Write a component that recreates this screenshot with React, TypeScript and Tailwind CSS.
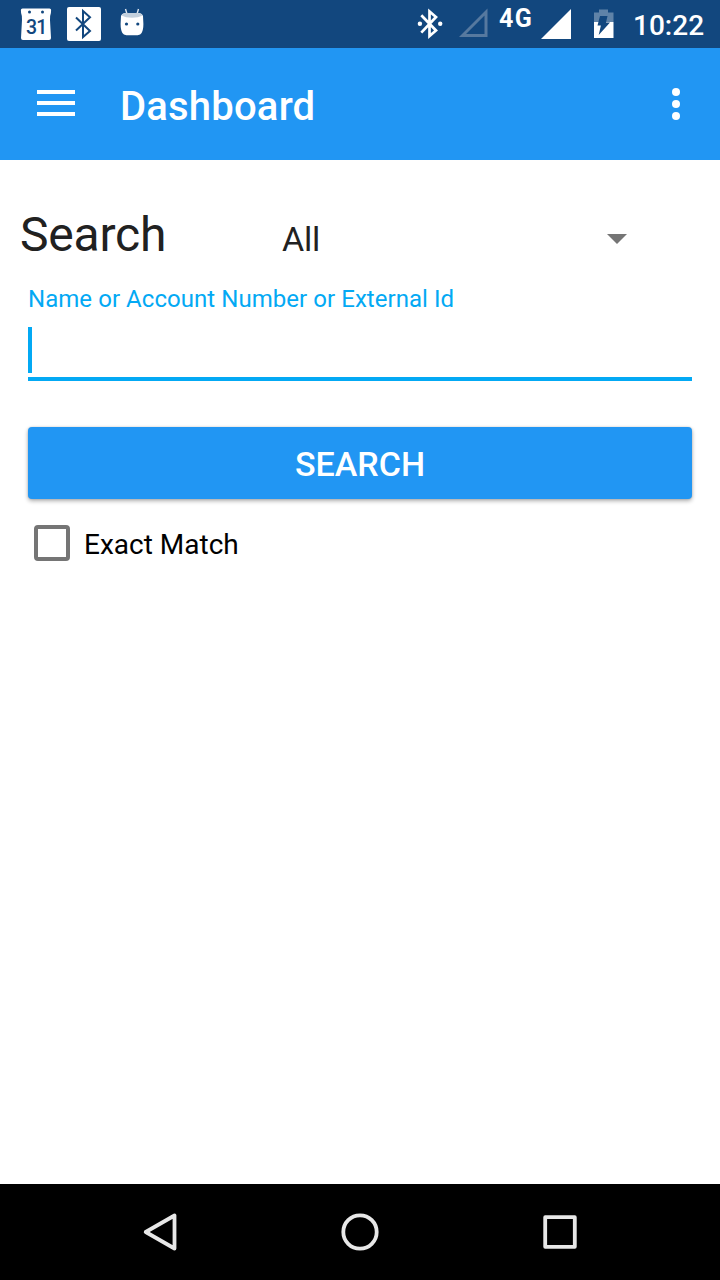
import React from "react";

function CalendarIcon() {
  return (
    <svg width="32" height="34" viewBox="20 7 32 34" className="block shrink-0">
      <path
        d="M22.500 8.500h27q1.700 0 1.600 1.500l-.2 3q-1.200 3-.9 7l1 18q0 2-2 2H23q-2 0-2-2l1-18q.3-4-.9-7l-.2-3q0-1.500 1.600-1.500z"
        fill="#fff"
      />
      <circle cx="29.500" cy="12" r="1.500" fill="#12477e" />
      <circle cx="42.500" cy="12" r="1.500" fill="#12477e" />
      <text x="26" y="33.500" fontFamily="Roboto, sans-serif" fontSize="19.500" fontWeight="500" letterSpacing="-0.900" fill="#12477e">
        31
      </text>
    </svg>
  );
}

function BluetoothBadge() {
  return (
    <svg width="34" height="34" viewBox="67 7 34 34" className="block shrink-0">
      <rect x="67" y="7" width="34" height="34" rx="2" fill="#fff" />
      <path d="M76 17.500L90 31l-7 6V11l7 6.200L76 30.500" fill="none" stroke="#12477e" strokeWidth="2" />
    </svg>
  );
}

function AndroidIcon() {
  return (
    <svg width="26" height="28" viewBox="119 8 26 28" className="block shrink-0">
      <path d="M125.500 9l1.500 5M138.500 9l-1.500 5" stroke="#dfe7ef" strokeWidth="1.400" />
      <path d="M121 16q1-3 5-3h12q4 0 5 3l.4 8q0 6-1.800 9-1 2-4 2.200h-11.200q-3-.2-4-2.200-1.800-3-1.800-9z" fill="#fff" />
      <path d="M121.500 15.500q1-2.500 4.500-2.500h12q3.500 0 4.500 2.500-4 2.200-10.500 2.200t-10.500-2.200z" fill="#c3d0dd" />
      <circle cx="126.500" cy="24" r="1.600" fill="#12477e" />
      <circle cx="137.800" cy="24" r="1.600" fill="#12477e" />
    </svg>
  );
}

function BluetoothConnected() {
  return (
    <svg width="28" height="32" viewBox="416 8 28 32" className="block shrink-0">
      <path d="M421.300 15.300L436 30.500l-6.500 5.500V11.500l6.500 5.500-14.700 15.700" fill="none" stroke="#fff" strokeWidth="2.700" />
      <circle cx="419.900" cy="23.800" r="2.200" fill="#fff" />
      <circle cx="440.200" cy="23.800" r="2.200" fill="#fff" />
    </svg>
  );
}

function BatteryCharging() {
  return (
    <svg width="20" height="30" viewBox="594 9 20 30" className="block shrink-0">
      <path d="M594 22V12.500h5V9.500h9v3h5.500V22z" fill="#5f83a8" />
      <path d="M594 22h19.500v16H594z" fill="#fff" />
      <path d="M600 16h7.500l-1.500 6.500h4L598.700 35l2.200-9.500h-3.400z" fill="#12477e" />
    </svg>
  );
}

function StatusBar() {
  return (
    <header className="flex h-12 items-start bg-[#12477e] pl-5 text-white">
      <div className="flex pt-[7px]">
        <CalendarIcon />
        <div className="ml-[15px]">
          <BluetoothBadge />
        </div>
        <div className="ml-[18px] pt-px">
          <AndroidIcon />
        </div>
      </div>
      <div className="ml-auto flex pr-4">
        <div className="pt-2">
          <BluetoothConnected />
        </div>
        <svg width="30" height="30" viewBox="459 8 30 30" className="mt-2 ml-[15px] block">
          <path d="M462.500 35.500h23.500V12z" fill="none" stroke="#56799f" strokeWidth="3" />
        </svg>
        <span className="mt-[4px] ml-[10px] w-[35px] text-[25px] leading-[30px] font-bold tracking-[1.5px] whitespace-nowrap">4G</span>
        <svg width="30" height="30" viewBox="541 9 30 30" className="mt-[9px] ml-[7px] block">
          <path d="M541 39h30V9z" fill="#fff" />
        </svg>
        <div className="mt-[9px] ml-[23px]">
          <BatteryCharging />
        </div>
        <span className="ml-[19px] w-[71px] text-[28px] leading-[51px] font-medium whitespace-nowrap">10:22</span>
      </div>
    </header>
  );
}

function AppBar() {
  return (
    <div className="flex h-28 items-center bg-[#2196f3] text-white">
      <button className="mb-0.5 ml-[37px] flex h-[26px] w-[38px] flex-col justify-between" aria-label="Menu">
        <span className="h-1 w-full bg-white" />
        <span className="h-1 w-full bg-white" />
        <span className="h-1 w-full bg-white" />
      </button>
      <h1 className="ml-[45px] pt-[5px] text-[40px] leading-[49px] font-medium tracking-[0.2px]">Dashboard</h1>
      <button className="mr-10 ml-auto flex flex-col gap-1" aria-label="More">
        <span className="size-2 rounded-full bg-white" />
        <span className="size-2 rounded-full bg-white" />
        <span className="size-2 rounded-full bg-white" />
      </button>
    </div>
  );
}

function NavigationBar() {
  return (
    <nav className="flex h-24 items-center justify-center bg-black">
      <svg width="200" height="96" viewBox="60 1184 200 96" className="block">
        <path d="M174.500 1215.500v33L145.700 1232z" fill="none" stroke="#e8e8e8" strokeWidth="3.800" strokeLinejoin="round" />
      </svg>
      <svg width="200" height="96" viewBox="260 1184 200 96" className="block">
        <circle cx="360" cy="1232" r="16.700" fill="none" stroke="#e8e8e8" strokeWidth="3.800" />
      </svg>
      <svg width="200" height="96" viewBox="460 1184 200 96" className="block">
        <rect x="545.200" y="1217.200" width="29.600" height="29.600" fill="none" stroke="#e8e8e8" strokeWidth="3.800" strokeLinejoin="round" />
      </svg>
    </nav>
  );
}

export default function App() {
  return (
    <div className="flex h-[1280px] w-[720px] flex-col overflow-hidden bg-white font-['Roboto',sans-serif]">
      <StatusBar />
      <AppBar />
      <main className="flex-1">
        <div className="flex h-[120px] items-start text-[#212121]">
          <h2 className="w-[282px] pt-[46px] pl-5 text-[48px] leading-[57px] tracking-[-0.2px]">Search</h2>
          <div className="flex w-[345px] items-center justify-between pt-[59px]">
            <span className="text-[34px] leading-10 tracking-[-0.2px]">All</span>
            <svg width="20" height="10" viewBox="0 0 20 10" className="block">
              <path d="M0 0h20L10 10z" fill="#757575" />
            </svg>
          </div>
        </div>
        <div className="mx-7">
          <label className="block pt-1 text-[24px] leading-[30px] tracking-[0.05px] text-[#03a9f4]">Name or Account Number or External Id</label>
          <div className="mt-[13px] flex h-[54px] items-start border-b-4 border-[#03a9f4]">
            <span className="h-[46px] w-1 bg-[#03a9f4]" />
          </div>
          <button className="mt-[46px] block h-[72px] w-full rounded-[4px] bg-[#2196f3] pt-0.5 text-[34px] leading-10 font-medium text-white shadow-[0_2px_4px_rgba(0,0,0,0.32),0_0_2px_rgba(0,0,0,0.15)]">
            SEARCH
          </button>
          <div className="mt-[26px] flex items-center pl-1.5">
            <span className="size-9 rounded-[4px] border-4 border-[#757575]" />
            <span className="ml-3.5 pt-[3px] text-[28px] leading-8 text-black">Exact Match</span>
          </div>
        </div>
      </main>
      <NavigationBar />
    </div>
  );
}
